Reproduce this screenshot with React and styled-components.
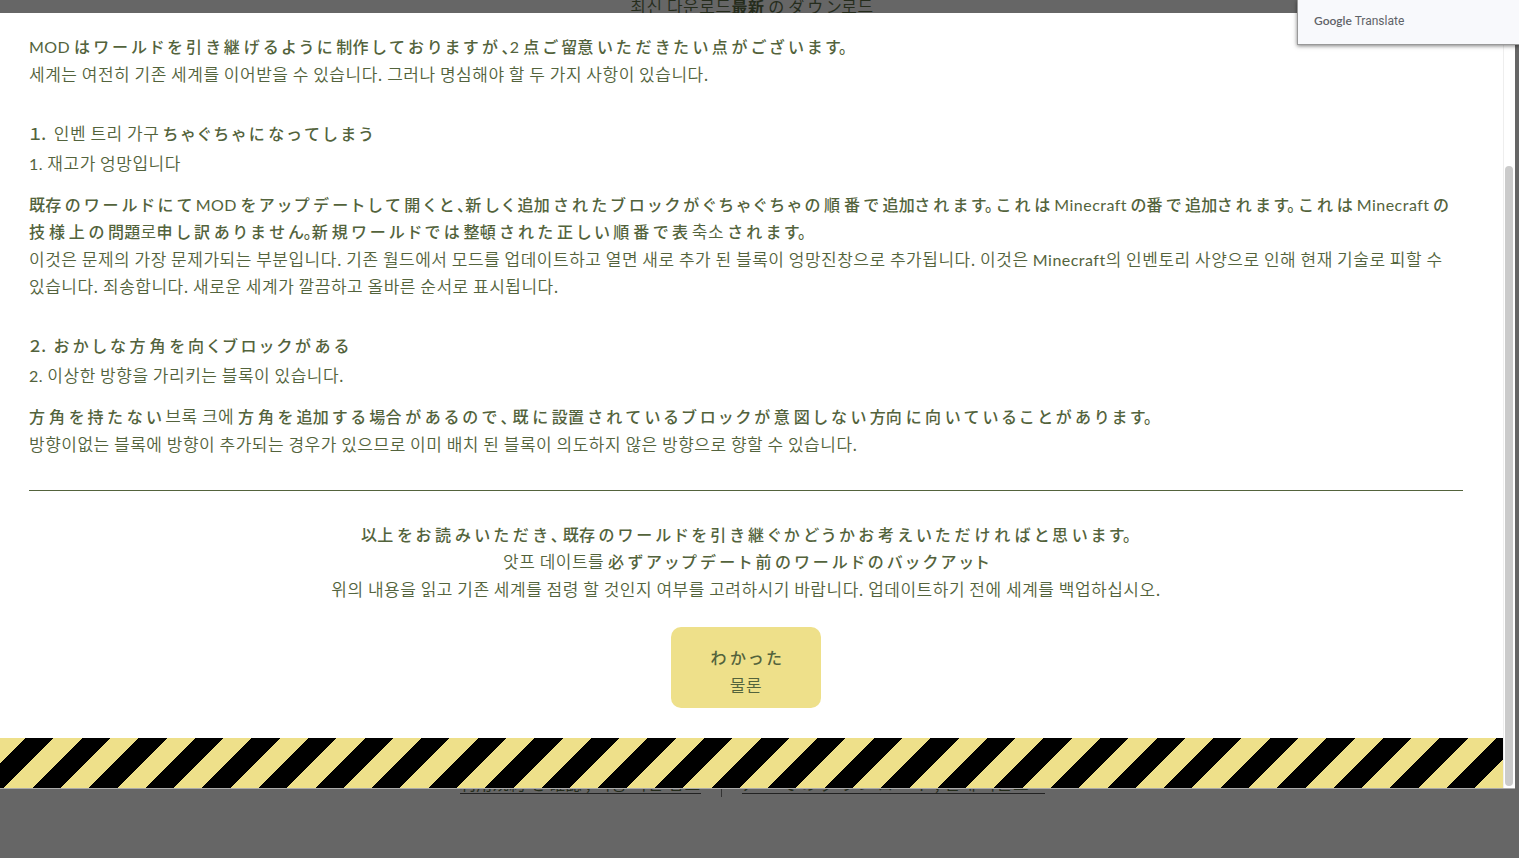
import React from 'react';
import styled, { createGlobalStyle } from 'styled-components';

const ink = '#53633c';
const khaki = '#eee08a';

const GlobalStyle = createGlobalStyle`
  * { box-sizing: border-box; }
  html, body, #root { height: 100%; }
  body {
    margin: 0;
    overflow: hidden;
    background: #666;
    color: ${ink};
    font-family: "Noto Sans CJK JP", sans-serif;
    font-size: 16px;
    line-height: 27px;
    letter-spacing: 0.03em;
  }
  p, h2 { margin: 0; }
`;

const Page = styled.div`
  position: relative;
  height: 100%;
  overflow: hidden;
  display: flex;
  flex-direction: column;
`;

const Peek = styled.div`
  flex: none;
  height: 13px;
  overflow: hidden;
  display: flex;
  justify-content: center;
  color: #252c1c;
  padding-right: 15px;
  h2 {
    font-size: 16px;
    font-weight: 400;
    line-height: 12px;
    font-feature-settings: "palt";
  }
`;

const Dialog = styled.section`
  flex: none;
  display: flex;
  margin-right: 4px;
  background: #fff;
  border-bottom: 1px solid #aaa;
`;

const Content = styled.div`
  flex: 1;
  min-width: 0;
`;

const Body = styled.div`
  padding: 20px 40px 30px 29px;
`;

const Ja = styled.span`
  display: block;
  font-weight: 500;
  letter-spacing: 0.01em;
  font-feature-settings: "palt";
`;

const Ko = styled.span`
  font-family: "Noto Sans CJK KR", sans-serif;
  font-size: 17px;
  font-weight: 350;
  line-height: 0;
  letter-spacing: 0.03em;
  word-break: keep-all;
  font-feature-settings: normal;
`;

const KoLine = styled(Ko)`
  display: block;
  line-height: inherit;
`;

const Latin = styled.span`
  font-family: Lato, sans-serif;
  font-size: 16px;
  font-weight: 400;
  line-height: 0;
  letter-spacing: 0.03em;
`;

const Para = styled.p`
  margin-bottom: ${(p) => p.$gap || 0}px;
  text-align: ${(p) => (p.$center ? 'center' : 'left')};
`;

const Item = styled.h2`
  font-size: 16px;
  font-weight: 400;
  line-height: 29px;
  margin-bottom: 14px;
`;

const Rule = styled.hr`
  border: 0;
  border-top: 1px solid ${ink};
  margin: 0 0 30px;
`;

const Confirm = styled.button`
  display: block;
  width: 150px;
  margin: 25px auto 0;
  padding: 17px 0 10px;
  border: 0;
  border-radius: 10px;
  background: ${khaki};
  color: inherit;
  font: inherit;
  letter-spacing: inherit;
`;

const Stripes = styled.div`
  height: 50px;
  background: repeating-linear-gradient(-45deg, ${khaki} 0 20px, #000 20px 40px);
`;

const Track = styled.div`
  flex: none;
  width: 12px;
  padding: 153px 2px 2px 1px;
  border-left: 1px solid #eee;
  display: flex;
`;

const Thumb = styled.div`
  flex: 1;
  border-radius: 4px;
  background: #cbcbcb;
`;

const Footer = styled.footer`
  display: flex;
  justify-content: center;
  height: 8px;
  overflow: hidden;
  padding-right: 14px;
  align-items: flex-end;
  white-space: nowrap;
`;

const FootLink = styled.a`
  line-height: 20px;
  margin: 0 20px 3px;
  border-bottom: 1px solid #222;
  color: #252c1c;
  text-decoration: none;
  font-feature-settings: "palt";
`;

const Divider = styled.span`
  width: 1px;
  height: 8px;
  background: #333;
`;

const TranslateBar = styled.aside`
  position: absolute;
  top: 0;
  right: 0;
  width: 222px;
  height: 45px;
  padding: 9px 16px;
  background: #f8f9fc;
  border: 1px solid #999;
  border-width: 0 0 1px 1px;
  box-shadow: 0 1px 4px rgba(0, 0, 0, 0.5);
  color: #5f6368;
  font: 12px/25px Roboto, sans-serif;
  letter-spacing: 0;
  b { font: 600 12px Lato, sans-serif; }
`;

export default function App() {
  return (
    <Page>
      <GlobalStyle />
      <Peek>
        <h2><Ko>최신 다운로드</Ko><b>最新</b> の ダ ウ ン<Ko>로드</Ko></h2>
      </Peek>
      <Dialog role="dialog" aria-label="MOD">
        <Content>
          <Body>
            <Para $gap={32}>
              <Ja><Latin>MOD</Latin> は ワ ー ル ド を 引 き 継 げ る よ う に 制作 し て お り ま す が 、<Latin>2</Latin> 点 ご 留意 い た だ き た い 点 が ご ざ い ま す。</Ja>
              <KoLine>세계는 여전히 기존 세계를 이어받을 수 있습니다. 그러나 명심해야 할 두 가지 사항이 있습니다.</KoLine>
            </Para>
            <Item>
              <Ja>１. &nbsp;<Ko>인벤 트리 가구</Ko> ち ゃ ぐ ち ゃ に な っ て し ま う</Ja>
              <KoLine><Latin>1.</Latin> 재고가 엉망입니다</KoLine>
            </Item>
            <Para $gap={32}>
              <Ja>既存 の ワ ー ル ド に て <Latin>MOD</Latin> を ア ッ プ デ ー ト し て 開 く と 、新 し く 追加 さ れ た ブ ロ ッ ク が ぐ ち ゃ ぐ ち ゃ の 順 番 で 追加さ れ ま す。 こ れ は <Latin>Minecraft</Latin> の番 で 追加さ れ ま す。 こ れ は <Latin>Minecraft</Latin> の 技 様 上 の 問題<Ko>로</Ko>申 し 訳 あ り ま せ ん。新 規 ワ ー ル ド で は 整頓 さ れ た 正 し い 順 番 で 表 <Ko>축소</Ko> さ れ ま す。</Ja>
              <KoLine>이것은 문제의 가장 문제가되는 부분입니다. 기존 월드에서 모드를 업데이트하고 열면 새로 추가 된 블록이 엉망진창으로 추가됩니다. 이것은 <Latin>Minecraft</Latin>의 인벤토리 사양으로 인해 현재 기술로 피할 수 있습니다. 죄송합니다. 새로운 세계가 깔끔하고 올바른 순서로 표시됩니다.</KoLine>
            </Para>
            <Item>
              <Ja>２. &nbsp;お か し な 方 角 を 向 く ブ ロ ッ ク が あ る</Ja>
              <KoLine><Latin>2.</Latin> 이상한 방향을 가리키는 블록이 있습니다.</KoLine>
            </Item>
            <Para $gap={33}>
              <Ja>方 角 を 持 た な い <Ko>브록 크에</Ko> 方 角 を 追加 す る 場合 が あ る の で 、 既 に 設置 さ れ て い る ブ ロ ッ ク が 意 図 し な い 方向 に 向 い て い る こ と が あ り ま す。</Ja>
              <KoLine>방향이없는 블록에 방향이 추가되는 경우가 있으므로 이미 배치 된 블록이 의도하지 않은 방향으로 향할 수 있습니다.</KoLine>
            </Para>
            <Rule />
            <Para $center>
              <Ja>以上 を お 読 み い た だ き 、 既存 の ワ ー ル ド を 引 き 継 ぐ か ど う か お 考 え い た だ け れ ば と 思 い ま す。</Ja>
              <Ja><Ko>앗프 데이트를</Ko> 必 ず ア ッ プ デ ー ト 前 の ワ ー ル ド の バ ッ ク ア ッ ト</Ja>
              <KoLine>위의 내용을 읽고 기존 세계를 점령 할 것인지 여부를 고려하시기 바랍니다. 업데이트하기 전에 세계를 백업하십시오.</KoLine>
            </Para>
            <Confirm type="button">
              <Ja>わ か っ た</Ja>
              <KoLine>물론</KoLine>
            </Confirm>
          </Body>
          <Stripes />
        </Content>
        <Track><Thumb /></Track>
      </Dialog>
      <Footer>
        <FootLink href="#terms">利用規約 を 確認 , <Ko>이용 약관 참조</Ko></FootLink>
        <Divider />
        <FootLink href="#archive">ア ー て の ダ ウ ン ロ ー ド , <Ko>현재 다운로드</Ko></FootLink>
      </Footer>
      <TranslateBar><b>Google</b> Translate</TranslateBar>
    </Page>
  );
}
